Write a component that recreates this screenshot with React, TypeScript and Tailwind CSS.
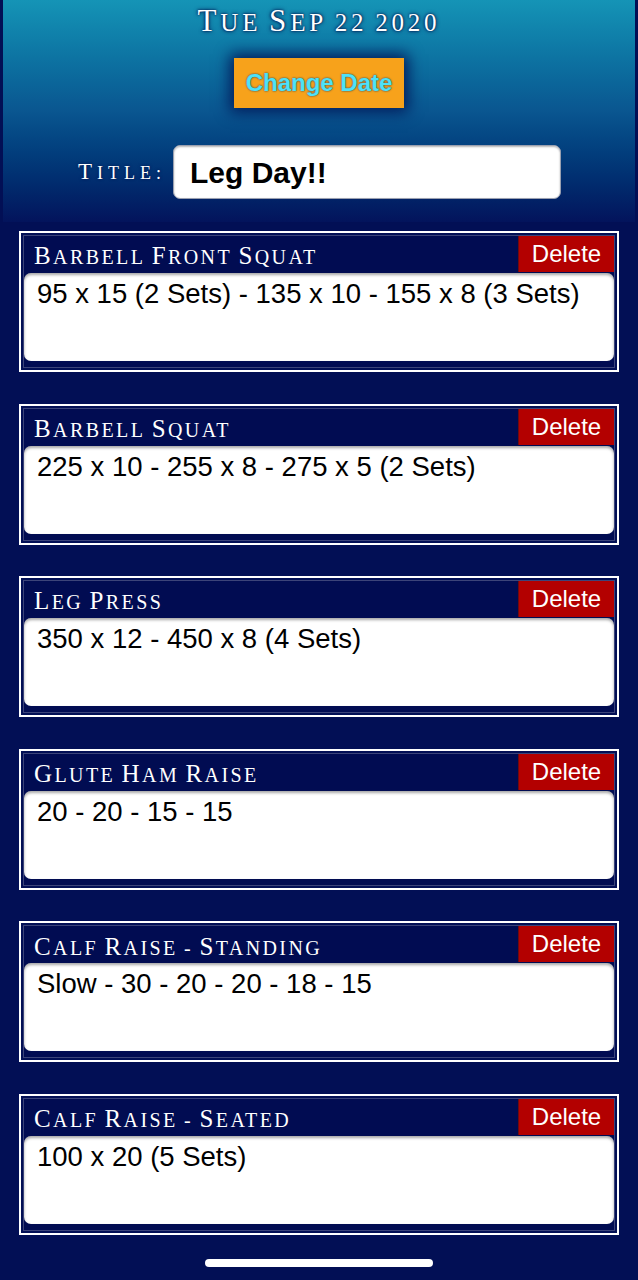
const exercises = [
  { name: 'Barbell Front Squat', notes: '95 x 15 (2 Sets) - 135 x 10 - 155 x 8 (3 Sets)' },
  { name: 'Barbell Squat', notes: '225 x 10 - 255 x 8 - 275 x 5 (2 Sets)' },
  { name: 'Leg Press', notes: '350 x 12 - 450 x 8 (4 Sets)' },
  { name: 'Glute Ham Raise', notes: '20 - 20 - 15 - 15' },
  { name: 'Calf Raise - Standing', notes: 'Slow - 30 - 20 - 20 - 18 - 15' },
  { name: 'Calf Raise - Seated', notes: '100 x 20 (5 Sets)' },
];

// big first letter, the rest in smaller caps (the system font's small caps are too small)
function Caps({ text, big, small }: { text: string; big: string; small: string }) {
  const words = text.split(' ');
  return (
    <>
      {words.map((w, i) => {
        const isLetter = /[A-Za-z]/.test(w[0]);
        return (
          <span key={i}>
            <span className={isLetter ? big : small}>{w[0]}</span>
            <span className={small}>{w.slice(1).toUpperCase()}</span>
            {i < words.length - 1 ? ' ' : ''}
          </span>
        );
      })}
    </>
  );
}

function ExerciseCard({ name, notes }: { name: string; notes: string }) {
  return (
    <div className="w-[600px] h-[141px] border-2 border-white bg-[#020f55] p-[2px]">
      <div className="h-full flex flex-col border border-[#3c4479] bg-[#010c52] pb-[6px]">
        <div className="h-[37px] flex items-center justify-between">
          <span className="pl-[10px] pt-[3px] text-white tracking-[2.4px] whitespace-nowrap font-['Liberation_Serif',serif]">
            <Caps text={name} big="text-[25px]" small="text-[20px]" />
          </span>
          <button className="w-[96px] h-[36px] self-start bg-[#b30000] border-l border-[#6d0a10] text-white text-[24px] font-['Liberation_Sans',Arial,sans-serif]">
            Delete
          </button>
        </div>
        <textarea
          readOnly
          defaultValue={notes}
          className="flex-1 resize-none outline-none bg-white rounded-[7px] px-[13px] pt-[5px] text-black text-[27.5px] leading-[32px] font-['Liberation_Sans',Arial,sans-serif] shadow-[inset_0_2px_3px_rgba(0,0,0,0.35)] overflow-hidden"
        />
      </div>
    </div>
  );
}

export default function App() {
  return (
    <div className="w-[638px] h-[1280px] bg-[#020f55] px-[3px] overflow-hidden">
      <div className="h-[222px] bg-linear-to-b from-[#1594b6] via-[#0a5690] to-[#03135c] flex flex-col items-center">
        <h1 className="mt-[2px] h-[38px] leading-[38px] text-white tracking-[3.8px] whitespace-nowrap font-['Liberation_Serif',serif] [text-shadow:0_0_4px_#02104a,0_0_2px_#02104a]">
          <Caps text="Tue Sep 22 2020" big="text-[31px]" small="text-[25px]" />
        </h1>
        <button className="mt-[18px] w-[170px] h-[50px] bg-[#f7a21b] shadow-[0_0_14px_4px_#031a5a] text-[#4ee2f7] text-[24px] font-bold font-['Liberation_Sans',Arial,sans-serif] [text-shadow:0_0_2px_#062c66]">
          Change Date
        </button>
        <div className="mt-[37px] w-full flex items-center">
          <span className="ml-[75px] w-[95px] h-[30px] leading-[30px] text-white tracking-[5px] whitespace-nowrap font-['Liberation_Serif',serif] [text-shadow:0_0_3px_#02104a]">
            <Caps text="Title:" big="text-[23px]" small="text-[18px]" />
          </span>
          <div className="w-[388px] h-[54px] bg-white rounded-[7px] border border-[#9aa0b0] flex items-center pl-[16px] shadow-[inset_0_1px_2px_rgba(0,0,0,0.3)]">
            <span className="text-black text-[30px] font-bold font-['Liberation_Sans',Arial,sans-serif]">Leg Day!!</span>
          </div>
        </div>
      </div>
      <div className="mt-[9px] ml-[16px] flex flex-col gap-[31.6px]">
        {exercises.map((e) => (
          <ExerciseCard key={e.name} name={e.name} notes={e.notes} />
        ))}
      </div>
      <div className="mt-[24px] mx-auto w-[228px] h-[8px] rounded-full bg-white" />
    </div>
  );
}
